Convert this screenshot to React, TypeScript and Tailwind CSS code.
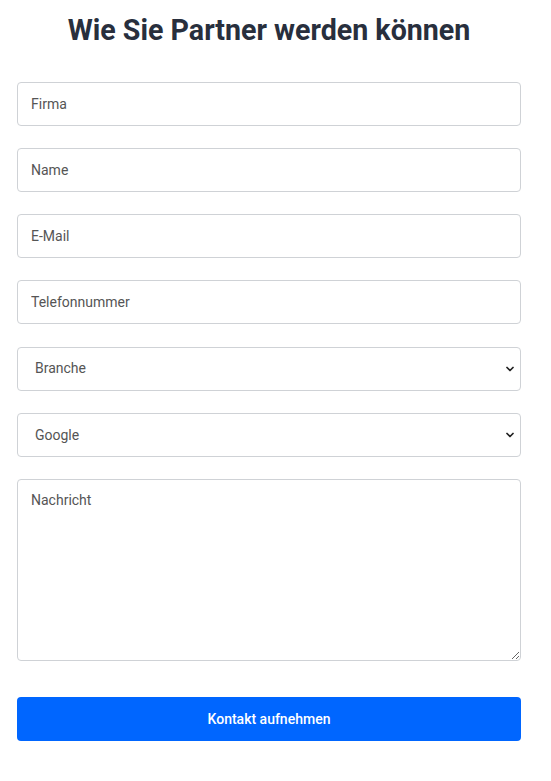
import { ChevronDown } from "lucide-react"

const fields = ["Firma", "Name", "E-Mail", "Telefonnummer"]
const selects = ["Branche", "Google"]

const inputClass =
    "w-full h-[44px] rounded-[4px] border border-[#cfd2d6] bg-white px-[13px] text-[14px] text-[#444] placeholder:text-[#555] outline-none"

export default function App() {
    return (
        <div className="min-h-[781px] bg-white font-['Roboto',sans-serif]">
            <div className="w-[504px] ml-[17px] pt-[12px]">
                <h2 className="text-center text-[28.6px] leading-[36px] font-bold text-[#282f3d] mb-[34px]">
                    Wie Sie Partner werden können
                </h2>
                <form className="flex flex-col gap-[22px]">
                    {fields.map((f) => (
                        <input key={f} type="text" placeholder={f} className={inputClass} />
                    ))}
                    {selects.map((s) => (
                        <div key={s} className="relative mt-[0.5px]">
                            <select className={inputClass + " appearance-none pl-[17px] text-[#555]"} defaultValue={s}>
                                <option>{s}</option>
                            </select>
                            <ChevronDown
                                className="absolute right-[5px] top-1/2 -translate-y-1/2 w-[12px] h-[12px] text-[#222] pointer-events-none"
                                strokeWidth={3.5}
                            />
                        </div>
                    ))}
                    <textarea
                        placeholder="Nachricht"
                        className="w-full h-[182px] rounded-[4px] border border-[#cfd2d6] bg-white px-[13px] py-[10px] text-[14px] text-[#444] placeholder:text-[#555] outline-none"
                    />
                    <button
                        type="button"
                        className="mt-[14px] h-[44px] w-full rounded-[4px] bg-[#0066ff] text-white text-[14px] font-medium"
                    >
                        Kontakt aufnehmen
                    </button>
                </form>
            </div>
        </div>
    )
}
